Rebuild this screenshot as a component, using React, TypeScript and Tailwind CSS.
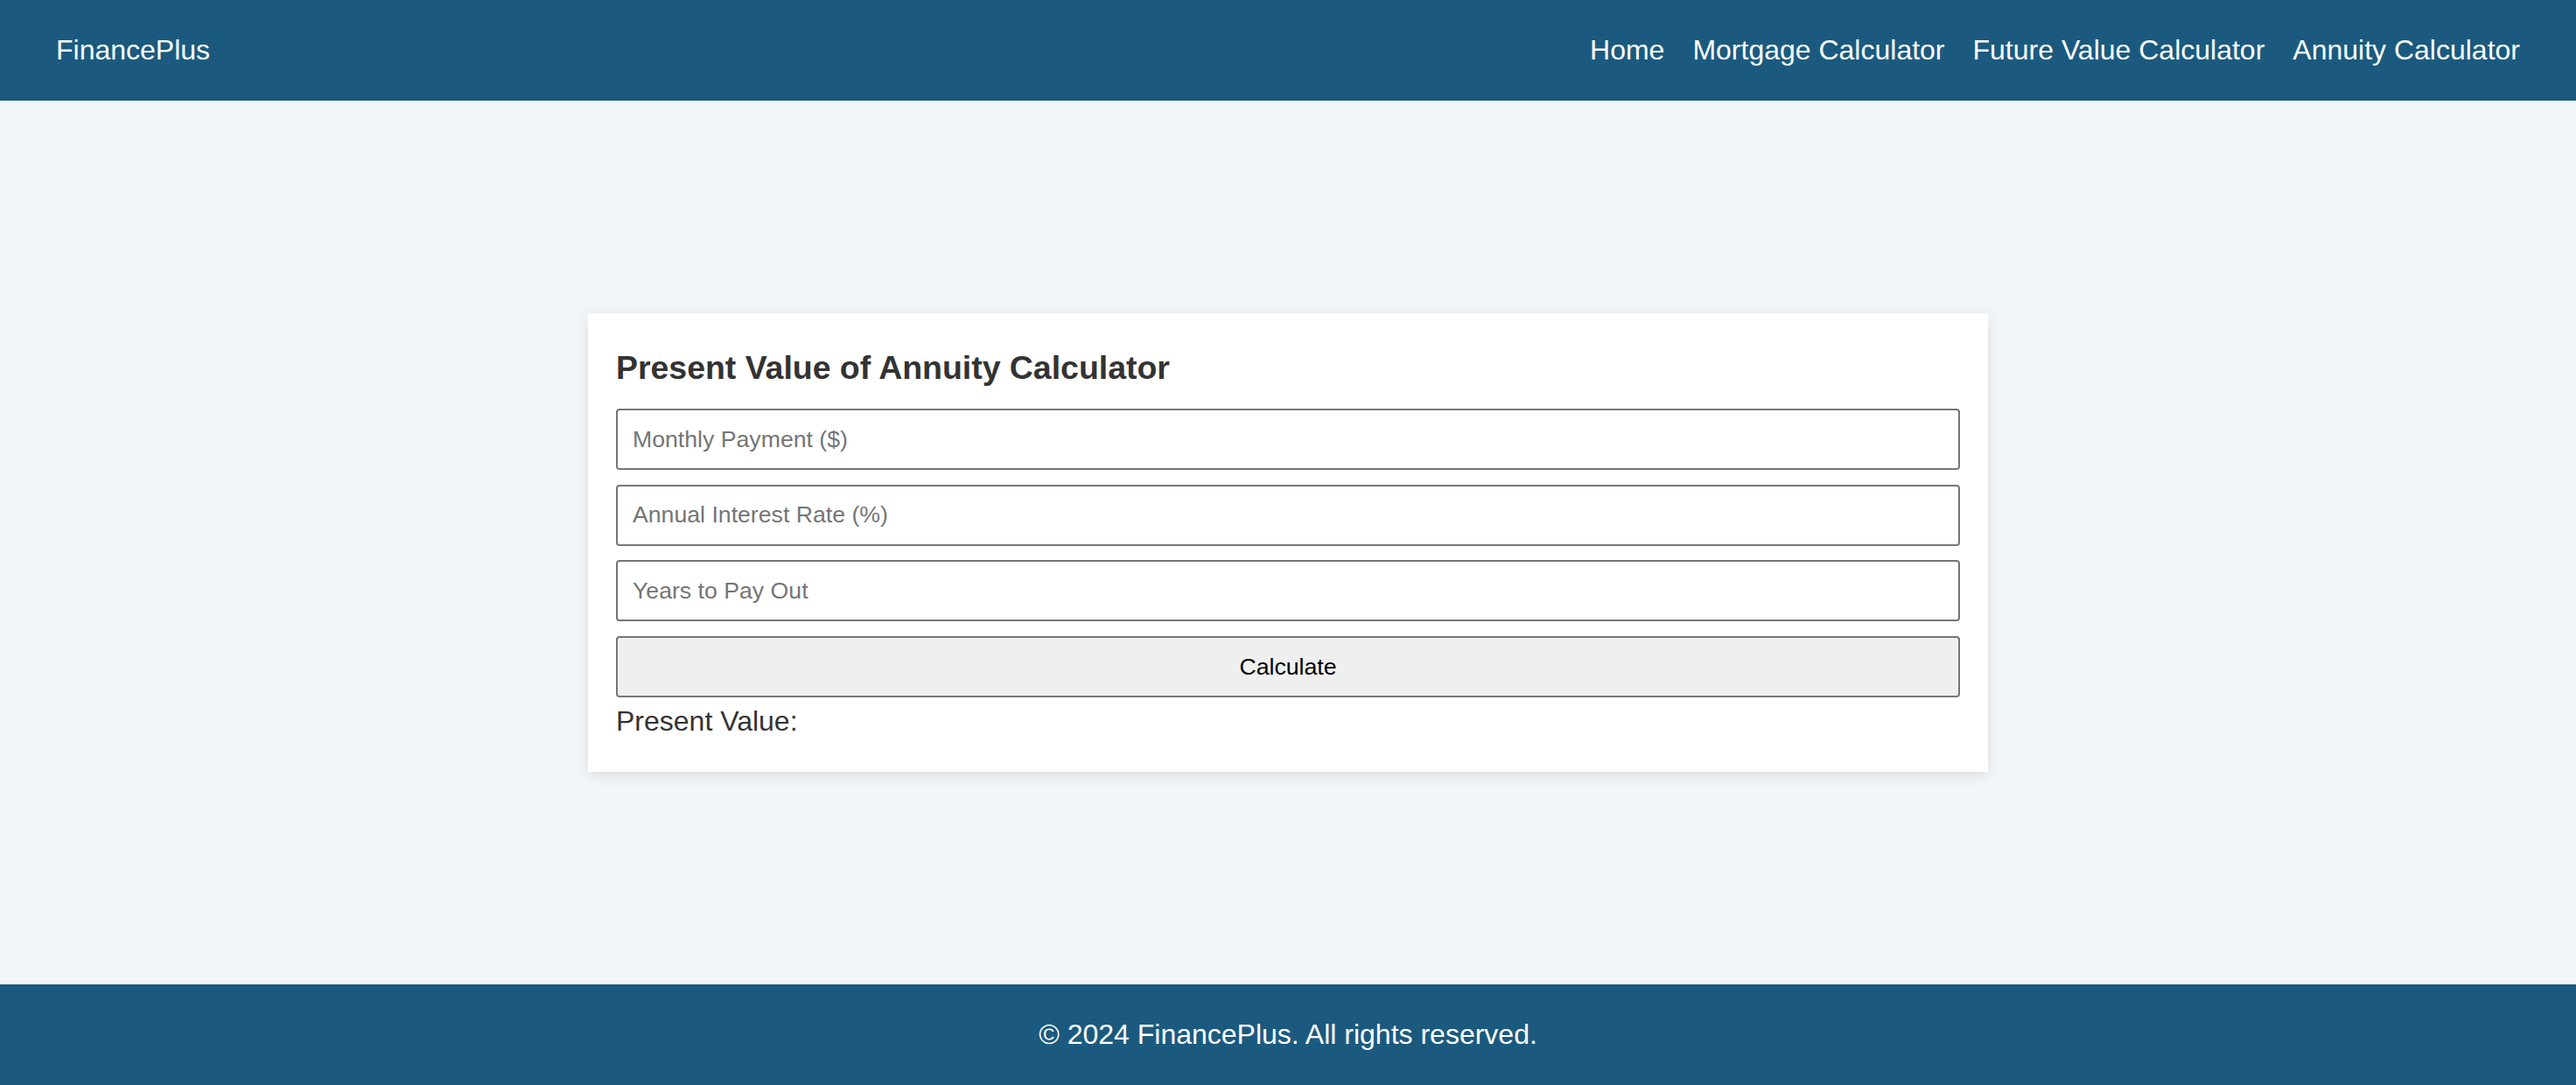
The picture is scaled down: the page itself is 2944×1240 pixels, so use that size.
const links = ["Home", "Mortgage Calculator", "Future Value Calculator", "Annuity Calculator"];

const fields = ["Monthly Payment ($)", "Annual Interest Rate (%)", "Years to Pay Out"];

export default function App() {
  return (
    <div
      className="flex h-[1240px] flex-col bg-[#f3f6f9]"
      style={{ fontFamily: '"Liberation Sans", Arial, sans-serif' }}
    >
      {/* header */}
      <header className="flex h-[115px] shrink-0 items-center justify-between bg-[#1b5a7e] px-16 text-[32px] leading-[37px] text-white">
        <div>FinancePlus</div>
        <nav className="flex gap-8">
          {links.map((l) => (
            <a key={l} href="#" className="text-white">
              {l}
            </a>
          ))}
        </nav>
      </header>

      {/* main */}
      <main className="flex flex-1 items-center justify-center">
        <div className="w-[1600px] bg-white px-8 pt-[41px] pb-[39px] shadow-[0_4px_16px_rgba(0,0,0,0.1)]">
          <h3 className="mb-[25px] text-[37.44px] leading-[43px] font-bold text-[#333]">
            Present Value of Annuity Calculator
          </h3>
          <div className="flex flex-col gap-[16.67px]">
            {fields.map((f) => (
              <input
                key={f}
                type="number"
                placeholder={f}
                className="h-[70px] w-full rounded-[4px] border-2 border-[#767676] bg-white px-[17px] text-[26.67px] text-black placeholder:text-[#757575] outline-none"
              />
            ))}
            <button className="h-[70px] w-full rounded-[4px] border-2 border-[#767676] bg-[#efefef] text-[26.67px] text-black">
              Calculate
            </button>
          </div>
          <p className="mt-[9px] text-[32px] leading-[37px] text-[#333]">Present Value:</p>
        </div>
      </main>

      {/* footer */}
      <footer className="flex h-[115px] shrink-0 items-center justify-center bg-[#1b5a7e] text-[32px] leading-[37px] text-white">
        © 2024 FinancePlus. All rights reserved.
      </footer>
    </div>
  );
}
